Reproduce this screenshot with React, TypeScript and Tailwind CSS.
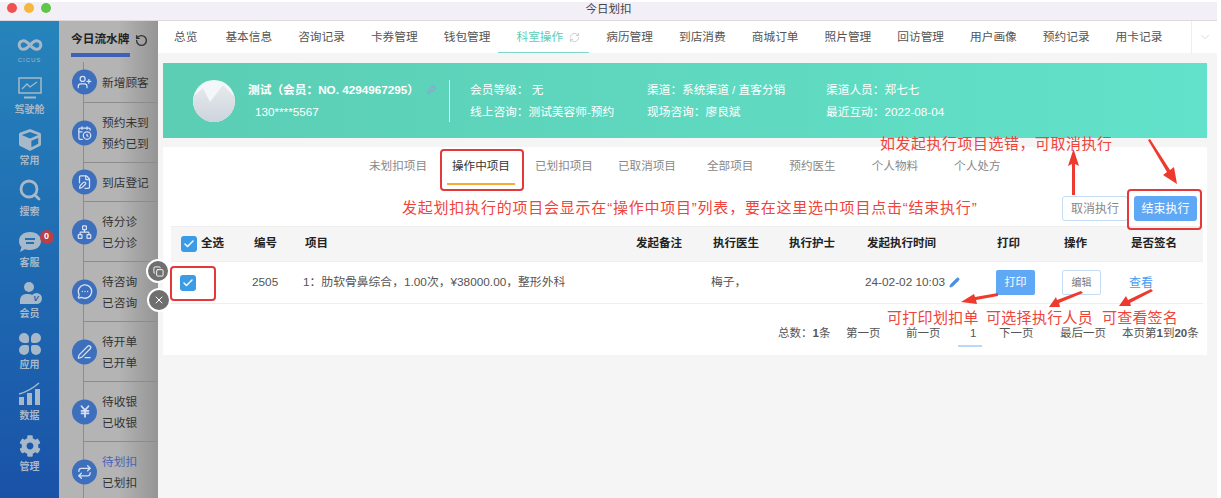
import { Check, ChevronDown, Copy, Infinity as InfinityIcon, KeyRound, MessageCircleMore, PenLine, Pencil, RefreshCw, RotateCw, Search, UserPlus, X, CalendarClock, FileEdit, Repeat, JapaneseYen, Network } from "lucide-react";
import { FaCog, FaCube } from "react-icons/fa";
import type { ReactNode } from "react";

const tabs = ["基本信息", "咨询记录", "卡券管理", "钱包管理"];
const tabsAfter = ["病历管理", "到店消费", "商城订单", "照片管理", "回访管理", "用户画像", "预约记录", "用卡记录"];

const Checkbox = () => (
  <span className="flex h-[16px] w-[16px] items-center justify-center rounded-[3px] bg-[#3a9be6]">
    <Check className="h-3 w-3 text-white" strokeWidth={3} />
  </span>
);

const NavItem = ({ icon, label }: { icon: ReactNode; label: string }) => (
  <div className="flex h-[51px] flex-col items-center justify-end text-[10px] leading-[14px] font-bold text-[#a7b8c8]">
    {icon}
    <span className="mt-[3px]">{label}</span>
  </div>
);

const FlowRow = ({ icon, lines, h, active }: { icon: ReactNode; lines: string[]; h: string; active?: boolean }) => (
  <div className={`relative flex items-center border-b border-[#8c8c8c] pl-[18px] ${h}`}>
    <span className="absolute -left-[12px] top-1/2 flex h-[25px] w-[25px] -translate-y-1/2 items-center justify-center rounded-full bg-[#3e6fbd] text-[#d6e2f2]">
      {icon}
    </span>
    <div className="flex flex-col gap-[6px] text-[11.7px] leading-[15px] text-[#333]">
      {lines.map((l, i) => (
        <span key={l} className={active && i === 0 ? "text-[#4a62b4]" : ""}>{l}</span>
      ))}
    </div>
  </div>
);

const Red = ({ className, children }: { className: string; children: ReactNode }) => (
  <div className={`absolute whitespace-nowrap text-[#f0443a] ${className}`}>{children}</div>
);

const RedBox = ({ className }: { className: string }) => (
  <div className={`absolute rounded-[4px] border-2 border-[#e5383b] ${className}`} />
);

const App = () => {
  return (
    <div
      className="relative h-[498px] w-[1221px] overflow-hidden bg-white pt-[2px] text-[12px]"
      style={{ fontFamily: '"Liberation Sans","Noto Sans CJK SC",sans-serif' }}
    >
      {/* title bar */}
      <div className="relative flex h-[19px] w-[1217px] items-center justify-center border-b border-[#dcdade] bg-[#f3eff6] pb-[3px] text-[11.5px] text-[#444]">
        <div className="absolute left-[7px] top-[1px] flex gap-[7px]">
          <span className="h-[10px] w-[10px] rounded-full bg-[#f0524f]" />
          <span className="h-[10px] w-[10px] rounded-full bg-[#f6b73c]" />
          <span className="h-[10px] w-[10px] rounded-full bg-[#5ec648]" />
        </div>
        今日划扣
      </div>

      <div className="flex h-[477px] w-[1217px]">
        {/* blue nav */}
        <div className="flex w-[59px] shrink-0 flex-col items-center bg-gradient-to-b from-[#2784bb] to-[#1a52a8] pt-[11px]">
          <div className="mb-[2px] flex flex-col items-center text-[#a7b8c8]">
            <InfinityIcon className="h-[26px] w-[30px]" strokeWidth={2.8} />
            <span className="-mt-[2px] text-[6px] leading-[8px] tracking-[1px]">CICUS</span>
          </div>
          <NavItem
            label="驾驶舱"
            icon={
              <svg width="24" height="23" viewBox="0 0 24 23" fill="none" stroke="#a7b8c8">
                <rect x="1" y="1" width="22" height="15" strokeWidth="1.5" />
                <polyline points="4,12 9,7 12,10 19,5" strokeWidth="1.3" />
                <path d="M6 20.5 H18" strokeWidth="2" />
              </svg>
            }
          />
          <NavItem label="常用" icon={<FaCube className="h-[22px] w-[22px]" />} />
          <NavItem label="搜索" icon={<Search className="h-[24px] w-[24px]" strokeWidth={2.8} />} />
          <div className="relative">
            <NavItem
              label="客服"
              icon={
                <svg width="24" height="22" viewBox="0 0 24 22" fill="#a7b8c8">
                  <path d="M12 1 C19 1 23 5 23 10 C23 15 19 19 12 19 C10 19 8 18.600 7 18.200 L2 21 L3.500 16 C1.800 14.500 1 12.500 1 10 C1 5 5 1 12 1 Z" />
                  <path d="M7 8 H17 M8 12 H16" stroke="#2272b4" strokeWidth="2" />
                </svg>
              }
            />
            <span className="absolute -right-[12px] top-[11px] flex h-[14px] w-[14px] items-center justify-center rounded-full bg-[#b93f48] text-[9px] font-bold text-white">0</span>
          </div>
          <NavItem
            label="会员"
            icon={
              <span className="relative block h-[22px] w-[24px]">
                <span className="absolute left-[6px] top-0 h-[10px] w-[10px] rounded-full bg-[#a7b8c8]" />
                <span className="absolute bottom-0 left-[2px] h-[10px] w-[15px] rounded-t-[6px] bg-[#a7b8c8]" />
                <span className="absolute bottom-0 right-0 flex h-[11px] w-[11px] items-center justify-center rounded-full bg-[#a7b8c8] text-[8px] font-bold italic leading-none text-[#1f60ac]">V</span>
              </span>
            }
          />
          <NavItem
            label="应用"
            icon={
              <span className="grid h-[22px] w-[22px] grid-cols-2 gap-[2px]">
                <span className="rounded-[50%_50%_20%_50%] bg-[#a7b8c8]" />
                <span className="rounded-[50%_50%_50%_20%] bg-[#a7b8c8]" />
                <span className="rounded-[50%_20%_50%_50%] bg-[#a7b8c8]" />
                <span className="rounded-[20%_50%_50%_50%] bg-[#a7b8c8]" />
              </span>
            }
          />
          <NavItem
            label="数据"
            icon={
              <svg width="24" height="24" viewBox="0 0 24 24" fill="#a7b8c8">
                <rect x="1" y="15" width="5" height="8" />
                <rect x="9" y="11" width="5" height="12" />
                <rect x="17" y="7" width="5" height="16" />
                <path d="M1 12 Q12 9 21 1" fill="none" stroke="#a7b8c8" strokeWidth="1.5" />
              </svg>
            }
          />
          <NavItem label="管理" icon={<FaCog className="h-[22px] w-[22px]" />} />
        </div>

        {/* flow column */}
        <div className="w-[99px] shrink-0 bg-gradient-to-r from-[#b4b4b4] from-60% to-[#959595] pl-[12px]">
          <div className="flex h-[41px] items-start pt-[9px] text-[11.7px] font-bold leading-[18px] text-[#222]">
            <span className="w-[59px] whitespace-nowrap border-b-[4px] border-[#3f62b8] pb-[5px]">今日流水牌</span>
            <RotateCw className="ml-[5px] mt-[4px] h-[13px] w-[13px] -scale-x-100 text-[#333]" strokeWidth={2.5} />
          </div>
          <div className="ml-[12px] border-l border-[#8c8c8c]">
            <FlowRow h="h-[41px]" lines={["新增顾客"]} icon={<UserPlus className="h-[15px] w-[15px]" />} />
            <FlowRow h="h-[60px]" lines={["预约未到", "预约已到"]} icon={<CalendarClock className="h-[15px] w-[15px]" />} />
            <FlowRow h="h-[39px]" lines={["到店登记"]} icon={<FileEdit className="h-[15px] w-[15px]" />} />
            <FlowRow h="h-[60px]" lines={["待分诊", "已分诊"]} icon={<Network className="h-[15px] w-[15px]" />} />
            <FlowRow h="h-[60px]" lines={["待咨询", "已咨询"]} icon={<MessageCircleMore className="h-[16px] w-[16px]" />} />
            <FlowRow h="h-[60px]" lines={["待开单", "已开单"]} icon={<PenLine className="h-[15px] w-[15px]" />} />
            <FlowRow h="h-[60px]" lines={["待收银", "已收银"]} icon={<JapaneseYen className="h-[14px] w-[14px]" strokeWidth={3} />} />
            <FlowRow h="h-[60px]" active lines={["待划扣", "已划扣"]} icon={<Repeat className="h-[15px] w-[15px]" />} />
          </div>
        </div>

        {/* main */}
        <div className="min-w-0 flex-1 bg-[#f5f5f5]">
          {/* tabs */}
          <div className="flex h-[32px] items-center bg-white pl-[16px] text-[11.7px] text-[#555]">
            <div className="flex flex-1 items-center gap-[26px]">
              <span className="mr-[2px]">总览</span>
              {tabs.map((t) => <span key={t}>{t}</span>)}
              <span className="relative flex h-[32px] items-center text-[#5ccdb8]">
                科室操作
                <RefreshCw className="ml-[6px] h-[11px] w-[11px] text-[#c8c8c8]" />
                <span className="absolute -left-[18px] bottom-0 h-[1px] w-[91px] bg-[#7fd8c8]" />
              </span>
              {tabsAfter.map((t) => <span key={t}>{t}</span>)}
            </div>
            <div className="flex h-[32px] w-[26px] items-center justify-center border-l border-[#eee]">
              <ChevronDown className="h-[14px] w-[14px] text-[#ccc]" strokeWidth={1.2} />
            </div>
          </div>

          <div className="pl-[5px] pr-[10px]">
            {/* member banner */}
            <div className="mt-[10px] flex h-[75px] items-center bg-gradient-to-r from-[#5bceb4] to-[#62e2ca] pl-[30px] text-[11.7px] text-white">
              <div className="relative h-[42px] w-[42px] shrink-0 overflow-hidden rounded-full bg-[#f4f7f9]">
                <svg className="absolute inset-0" viewBox="0 0 42 42">
                  <defs>
                    <linearGradient id="hill" x1="0" y1="0" x2="0" y2="1">
                      <stop offset="0" stopColor="#e6eaee" />
                      <stop offset="1" stopColor="#cdd4dc" />
                    </linearGradient>
                  </defs>
                  <path d="M0 17 L10 8 L17 22 L30 5 L42 17 L42 42 L0 42 Z" fill="url(#hill)" />
                </svg>
              </div>
              <div className="ml-[13px] w-[188px] shrink-0 leading-[15px]">
                <div className="flex items-center font-bold">
                  <span className="w-[188px] whitespace-nowrap">测试（会员：NO. 4294967295）</span>
                  <KeyRound className="-ml-[4px] h-[9px] w-[9px] shrink-0 text-[#c07fe0]" />
                </div>
                <div className="mt-[7px] pl-[7px]">130****5567</div>
              </div>
              <div className="ml-[13px] h-[42px] w-px shrink-0 bg-white/80" />
              <div className="ml-[20px] w-[177px] shrink-0 leading-[15px]">
                <div>会员等级：&nbsp;无</div>
                <div className="mt-[7px]">线上咨询：测试美容师-预约</div>
              </div>
              <div className="w-[179px] shrink-0 leading-[15px]">
                <div>渠道：系统渠道 / 直客分销</div>
                <div className="mt-[7px]">现场咨询：廖良斌</div>
              </div>
              <div className="leading-[15px]">
                <div>渠道人员：郑七七</div>
                <div className="mt-[7px]">最近互动：2022-08-04</div>
              </div>
            </div>

            {/* panel */}
            <div className="mt-[9px] h-[208px] bg-white">
              <div className="flex h-[37px] items-end pl-[206px] text-[11.6px] leading-[18px] text-[#888]">
                <span className="mb-[9px]">未划扣项目</span>
                <span className="relative ml-[25px] mb-[9px] text-[#333]">
                  操作中项目
                  <span className="absolute -left-[5px] -bottom-[10px] h-[2px] w-[68px] bg-[#f5ab35]" />
                </span>
                <span className="ml-[25px] mb-[9px]">已划扣项目</span>
                <span className="ml-[25px] mb-[9px]">已取消项目</span>
                <span className="ml-[31px] mb-[9px]">全部项目</span>
                <span className="ml-[36px] mb-[9px]">预约医生</span>
                <span className="ml-[36px] mb-[9px]">个人物料</span>
                <span className="ml-[36px] mb-[9px]">个人处方</span>
              </div>

              <div className="mt-[12px] flex justify-end gap-[6px] pr-[10px]">
                <button className="h-[25px] w-[66px] rounded-[3px] border border-[#c5dcf5] text-[12px] text-[#888]">取消执行</button>
                <button className="h-[25px] w-[63px] rounded-[3px] bg-[#5fa8f5] text-[12px] text-white">结束执行</button>
              </div>

              <div className="ml-[8px] mr-[4px] mt-[5px]">
                <div className="grid h-[36px] grid-cols-[73px_51px_331px_77px_76px_78px_130px_67px_67px_1fr] items-center border-y border-[#eee] bg-[#f5f5f5] pl-[10px] text-[11.5px] font-bold text-[#222]">
                  <span className="flex items-center gap-[4px]"><Checkbox />全选</span>
                  <span>编号</span>
                  <span>项目</span>
                  <span>发起备注</span>
                  <span>执行医生</span>
                  <span>执行护士</span>
                  <span>发起执行时间</span>
                  <span>打印</span>
                  <span>操作</span>
                  <span>是否签名</span>
                </div>
                <div className="grid h-[42px] grid-cols-[73px_51px_408px_154px_131px_66px_67px_1fr] items-center border-b border-[#eee] pl-[8px] text-[11.8px] text-[#555]">
                  <span className="pl-[1px]"><Checkbox /></span>
                  <span>2505</span>
                  <span className="whitespace-nowrap">1：肋软骨鼻综合，1.00次，¥38000.00，整形外科</span>
                  <span>梅子，</span>
                  <span className="flex items-center gap-[4px] whitespace-nowrap">24-02-02 10:03<Pencil className="h-[11px] w-[11px] text-[#4a90e2]" fill="#4a90e2" /></span>
                  <button className="h-[25px] w-[39px] rounded-[2px] bg-[#5fa8f5] text-[11px] text-white">打印</button>
                  <button className="h-[25px] w-[39px] rounded-[2px] border border-[#c5dcf5] text-[10px] text-[#777]">编辑</button>
                  <span className="text-[12px] text-[#4a9bf0]">查看</span>
                </div>
              </div>

              {/* pagination */}
              <div className="flex h-[50px] items-center pl-[615px] pt-[10px] text-[11.5px] text-[#555]">
                <span className="w-[68px]">总数：<b>1</b>条</span>
                <span className="w-[60px]">第一页</span>
                <span className="w-[52px]">前一页</span>
                <span className="relative w-[41px] pl-[12px]">
                  1
                  <span className="absolute left-0 top-[20px] h-[2px] w-[24px] bg-[#bcd8f7]" />
                </span>
                <span className="w-[61px]">下一页</span>
                <span className="w-[62px]">最后一页</span>
                <span className="whitespace-nowrap">本页第<b>1</b>到<b>20</b>条</span>
              </div>
            </div>
          </div>
        </div>
      </div>

      {/* floating window buttons */}
      <span className="absolute left-[146px] top-[259px] flex h-[24px] w-[24px] items-center justify-center rounded-full border-2 border-white bg-[#6f6f6f]">
        <Copy className="h-[11px] w-[11px] text-white" />
      </span>
      <span className="absolute left-[147px] top-[288px] flex h-[24px] w-[24px] items-center justify-center rounded-full border-2 border-white bg-[#6f6f6f]">
        <X className="h-[12px] w-[12px] text-white" />
      </span>

      {/* annotations */}
      <RedBox className="left-[440px] top-[149px] h-[42px] w-[84px]" />
      <RedBox className="left-[1127px] top-[189px] h-[41px] w-[75px]" />
      <RedBox className="left-[170px] top-[266px] h-[35px] w-[46px]" />
      <Red className="left-[880px] top-[134px] text-[15px] leading-[20px] tracking-[0.5px]">如发起执行项目选错，可取消执行</Red>
      <Red className="left-[402px] top-[198px] text-[15px] leading-[20px] tracking-[0.78px]">发起划扣执行的项目会显示在“操作中项目”列表，要在这里选中项目点击“结束执行”</Red>
      <Red className="left-[887px] top-[308px] text-[15px] leading-[20px] tracking-[0.3px]">可打印划扣单</Red>
      <Red className="left-[986px] top-[308px] text-[15px] leading-[20px] tracking-[0.3px]">可选择执行人员</Red>
      <Red className="left-[1102px] top-[308px] text-[15px] leading-[20px] tracking-[0.2px]">可查看签名</Red>
      <svg className="pointer-events-none absolute inset-0" width="1221" height="498" viewBox="0 0 1221 498">
        <g fill="#ee3a2e">
          <path d="M1072 195 L1072 164 L1068 166 L1073.5 149 L1079 166 L1075 164 L1075 195 Z" />
          <path d="M1148 140 L1150 139 L1170 170 L1174 167 L1177 184 L1163 175 L1167 172 Z" />
          <path d="M998 293 L998 296 L976 300 L977 304 L961 302 L974 294 L975 297 Z" />
          <path d="M1081 291 L1083 293 L1059 303 L1060 307 L1049 307 L1056 297 L1057 300 Z" />
          <path d="M1151 289 L1153 291 L1130 303 L1131 306 L1119 306 L1126 296 L1128 300 Z" />
        </g>
      </svg>
    </div>
  );
};

export default App;
